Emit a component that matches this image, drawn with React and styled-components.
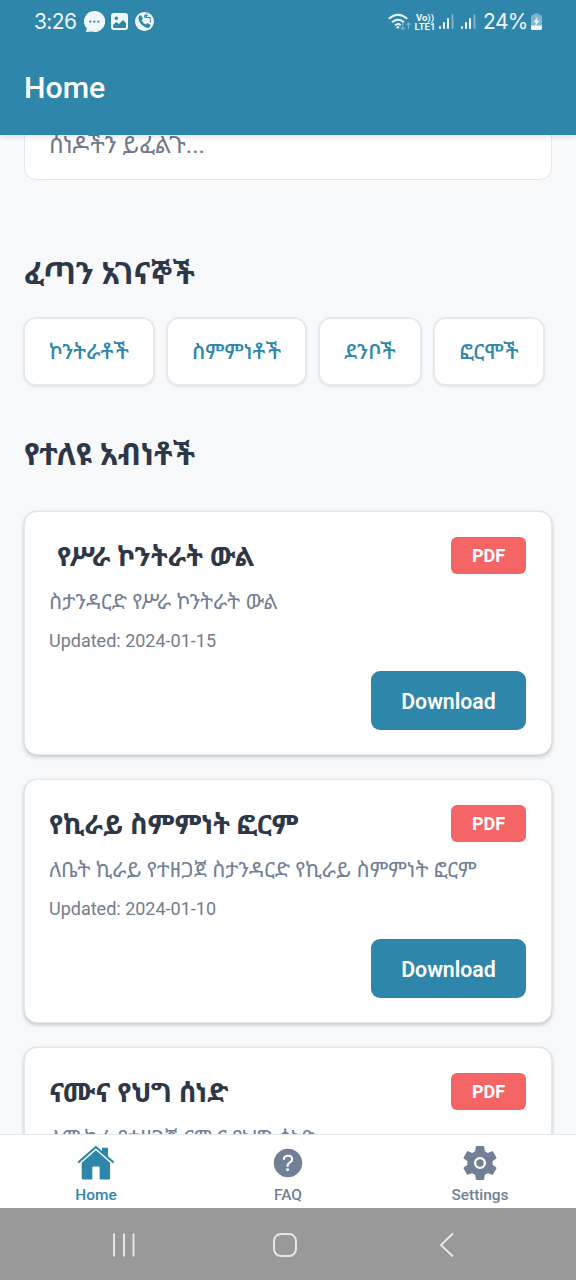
import React from "react";
import styled, { createGlobalStyle } from "styled-components";
import { IoHelpCircle } from "react-icons/io5";

const GlobalStyle = createGlobalStyle`
  * {
    box-sizing: border-box;
  }
  body {
    margin: 0;
    background: #f7f9fb;
    font-family: Roboto, "Noto Sans", "Noto Sans Ethiopic", sans-serif;
  }
`;

const Screen = styled.div`
  display: flex;
  flex-direction: column;
  width: 576px;
  height: 1280px;
  overflow: hidden;
  background: #f7f9fb;
`;

const Header = styled.header`
  flex: none;
  height: 135px;
  background: #2e86ab;
  color: #fff;
  box-shadow: 0 1px 6px rgba(0, 0, 0, 0.15);
  z-index: 1;
`;

const StatusBar = styled.div`
  display: flex;
  align-items: center;
  justify-content: space-between;
  height: 43px;
  padding: 0 34px;
  color: #f0f7fb;
`;

const StatusGroup = styled.div`
  display: flex;
  align-items: center;
`;

const StatusText = styled.span`
  flex: none;
  width: ${(props) => props.$width}px;
  margin-left: ${(props) => props.$gap || 0}px;
  font-family: Inter, sans-serif;
  font-size: 21px;
  line-height: 43px;
  letter-spacing: -0.6px;
  white-space: nowrap;
`;

const StatusIcon = styled.svg`
  display: block;
  flex: none;
  margin-left: ${(props) => props.$gap || 0}px;
`;

const Lte = styled.div`
  flex: none;
  width: 22px;
  margin-left: 3px;
  font-size: 9.5px;
  font-weight: 700;
  line-height: 9px;
  text-align: center;
  white-space: nowrap;
`;

const Title = styled.h1`
  margin: 0;
  padding: 25px 24px 0;
  font-size: 30.3px;
  font-weight: 500;
  line-height: 40px;
`;

const Content = styled.main`
  flex: 1;
  min-height: 0;
  overflow: hidden;
  padding: 0 24px;
`;

const SearchBox = styled.div`
  height: 76px;
  margin-top: -31px;
  padding: 26px 24px 0;
  border: 1.5px solid #e2e8f0;
  border-radius: 12px;
  background: #fff;
  color: #717988;
  font-size: 24px;
  line-height: 28px;
`;

const SectionTitle = styled.h2`
  height: 36px;
  margin: ${(props) => props.$top}px 0 0;
  color: #2d3748;
  font-size: 30.3px;
  font-weight: 700;
  line-height: 36px;
`;

const Chips = styled.div`
  display: flex;
  gap: 11px;
  margin: 25px 0 0 -1px;
`;

const Chip = styled.button`
  flex: none;
  width: ${(props) => props.$width}px;
  height: 69px;
  padding: 0 0 2px;
  border: 2px solid #e6eaef;
  border-radius: 13px;
  background: #fff;
  box-shadow: 0 1px 2px rgba(0, 0, 0, 0.08);
  color: #2e86ab;
  font-family: inherit;
  font-size: 21.3px;
  font-weight: 500;
`;

const CardList = styled.div`
  display: flex;
  flex-direction: column;
  gap: 24px;
  margin-top: 38px;
`;

const Card = styled.article`
  height: 244px;
  padding: 25px 25px 0 24px;
  border: 1.5px solid #e2e8ee;
  border-radius: 13px;
  background: #fff;
  box-shadow: 0 2px 4px rgba(0, 0, 0, 0.2), 0 0 1px rgba(0, 0, 0, 0.12);
`;

const CardHead = styled.div`
  display: flex;
  align-items: flex-start;
  justify-content: space-between;
`;

const CardTitle = styled.h3`
  margin: 0;
  padding-left: ${(props) => props.$indent || 0}px;
  color: #2d3748;
  font-size: 27.3px;
  font-weight: 700;
  line-height: 40px;
  white-space: nowrap;
`;

const Badge = styled.span`
  width: 75px;
  height: 37px;
  border-radius: 6px;
  background: #f56565;
  color: #fff;
  font-size: 18px;
  font-weight: 700;
  line-height: 38px;
  text-align: center;
`;

const Description = styled.p`
  height: 30px;
  margin: 10px 0 0;
  color: #718096;
  font-size: 21.4px;
  line-height: 30px;
  white-space: nowrap;
`;

const Updated = styled.p`
  margin: 13px 0 0;
  color: #747d8c;
  font-size: 18px;
  line-height: 22px;
`;

const Download = styled.button`
  display: block;
  width: 155px;
  height: 59px;
  margin: 19px 0 0 auto;
  padding: 2px 0 0;
  border: 0;
  border-radius: 9px;
  background: #2e86ab;
  color: #fff;
  font-family: inherit;
  font-size: 21.3px;
  font-weight: 600;
`;

const TabBar = styled.nav`
  display: flex;
  flex: none;
  height: 74px;
  border-top: 1px solid #e2e8f0;
  background: #fff;
  z-index: 1;
`;

const Tab = styled.div`
  display: flex;
  flex: 1;
  flex-direction: column;
  align-items: center;
  padding-top: 9px;
  color: ${(props) => (props.$active ? "#2e86ab" : "#718096")};
  font-size: 15.4px;
  font-weight: 500;

  svg {
    display: block;
    width: 38px;
    height: 38px;
  }

  span {
    margin-top: 4px;
    line-height: 18px;
  }
`;

const SystemBar = styled.footer`
  display: grid;
  flex: none;
  grid-template-columns: 162px 160px 164px;
  height: 72px;
  padding-left: 43px;
  background: #999;

  svg {
    place-self: center;
    margin-top: 1px;
  }
`;

const links = [
  { label: "ኮንትራቶች", width: 132 },
  { label: "ስምምነቶች", width: 141 },
  { label: "ደንቦች", width: 104 },
  { label: "ፎርሞች", width: 112 },
];

const documents = [
  {
    title: "የሥራ ኮንትራት ውል",
    indent: 8,
    description: "ስታንዳርድ የሥራ ኮንትራት ውል",
    updated: "2024-01-15",
  },
  {
    title: "የኪራይ ስምምነት ፎርም",
    description: "ለቤት ኪራይ የተዘጋጀ ስታንዳርድ የኪራይ ስምምነት ፎርም",
    updated: "2024-01-10",
  },
  {
    title: "ናሙና የህግ ሰነድ",
    description: "ለሙከራ የተዘጋጀ ናሙና የህግ ሰነድ",
    updated: "2024-01-05",
  },
];

function HomeIcon() {
  return (
    <svg viewBox="0 0 38 38" fill="currentColor">
      <path d="M1.8 18 18.9 3 36 18" fill="none" stroke="currentColor" strokeWidth="2.2" strokeLinecap="round" strokeLinejoin="round" />
      <path d="M25 3.8h6v10L25 8.5Z" />
      <path d="M4.7 18.8 18.9 6.3 33.1 18.8V34q0 1.5-1.5 1.5h-9V23.6q0-1-1-1h-5.3q-1 0-1 1v11.9h-9q-1.6 0-1.6-1.5Z" />
    </svg>
  );
}

function SettingsIcon() {
  return (
    <svg viewBox="1.25 1.25 21.5 21.5" fill="currentColor">
      <path d="M19.14 12.94c.04-.3.06-.61.06-.94 0-.32-.02-.64-.07-.94l2.03-1.58c.18-.14.23-.41.12-.61l-1.92-3.32c-.12-.22-.37-.29-.59-.22l-2.39.96c-.5-.38-1.03-.7-1.62-.94l-.36-2.54c-.04-.24-.24-.41-.48-.41h-3.84c-.24 0-.43.17-.47.41l-.36 2.54c-.59.24-1.13.57-1.62.94l-2.39-.96c-.22-.08-.47 0-.59.22L2.74 8.87c-.12.21-.08.47.12.61l2.03 1.58c-.05.3-.09.63-.09.94s.02.64.07.94l-2.03 1.58c-.18.14-.23.41-.12.61l1.92 3.32c.12.22.37.29.59.22l2.39-.96c.5.38 1.03.7 1.62.94l.36 2.54c.05.24.24.41.48.41h3.84c.24 0 .44-.17.47-.41l.36-2.54c.59-.24 1.13-.56 1.62-.94l2.39.96c.22.08.47 0 .59-.22l1.92-3.32c.12-.22.07-.47-.12-.61Z" />
      <circle cx="12" cy="12" r="2.75" fill="none" stroke="#fff" strokeWidth="1.35" />
    </svg>
  );
}

function Signal({ gap }) {
  return (
    <StatusIcon $gap={gap} width="15" height="17" viewBox="0 0 15 17" fill="currentColor">
      <rect x="0" y="13" width="2" height="3" rx="1" />
      <rect x="4" y="9" width="2" height="7" rx="1" />
      <rect x="8" y="5" width="2" height="11" rx="1" />
      <rect x="12.5" y="1" width="2" height="15" rx="1" opacity=".4" />
    </StatusIcon>
  );
}

function Status() {
  return (
    <StatusBar>
      <StatusGroup>
        <StatusText $width={43}>3:26</StatusText>
        <StatusIcon $gap={7} width="21" height="21" viewBox="0 0 21 21">
          <path d="M10.5 0a10.5 10.5 0 1 1-2.6 20.6L2 21l.8-3.4A10.5 10.5 0 0 1 10.5 0Z" fill="currentColor" />
          <circle cx="6.3" cy="10.7" r="1.1" fill="#2e86ab" />
          <circle cx="10.3" cy="10.7" r="1.1" fill="#2e86ab" />
          <circle cx="14.3" cy="10.7" r="1.1" fill="#2e86ab" />
        </StatusIcon>
        <StatusIcon $gap={6} width="17" height="17" viewBox="0 0 17 17">
          <rect width="17" height="17" rx="3" fill="currentColor" />
          <circle cx="5.4" cy="5.2" r="1.7" fill="#2e86ab" />
          <path d="M2 14v-2l3-3 3 2 4-4 3 3v4q0 1-1 1H3q-1 0-1-1Z" fill="#2e86ab" />
        </StatusIcon>
        <StatusIcon $gap={7} width="19" height="19" viewBox="0 0 19 19">
          <circle cx="9.5" cy="9.5" r="9.5" fill="currentColor" />
          <path d="M4.2 4.2 6 3l2 3.8-1.5 1.5q1.5 3 4.1 4.1l1.6-1.5 3.5 2.2-1.2 2.2q-1.6 1.3-4.2 0-5.2-2.5-6.8-8-.4-1.8.7-3.1Z" fill="#2e86ab" />
          <path d="M9.5 5.5v-2h3M10 5.5h5.3v5M12.5 1.2 10 3.5l2.5 2" fill="none" stroke="#2e86ab" strokeWidth="1" />
        </StatusIcon>
      </StatusGroup>
      <StatusGroup>
        <StatusIcon width="23" height="18" viewBox="0 0 23 18" fill="none" stroke="currentColor" strokeWidth="2">
          <path d="M.8 5.7Q10 -2.2 19.2 5.7M4 9.2q6-5 12 0M7 12.3q3-2.4 5.7-.2" />
          <circle cx="9.8" cy="14.3" r="1.4" fill="currentColor" stroke="none" />
          <path d="M14.8 9.5v7m-2-2 2 2 2-2M20.5 16v-6m-2 2 2-2 2 2" strokeWidth="1.2" opacity=".4" />
        </StatusIcon>
        <Lte>
          Vo))
          <br />
          LTE1
        </Lte>
        <Signal gap={3} />
        <Signal gap={7} />
        <StatusText $width={43} $gap={7}>
          24%
        </StatusText>
        <StatusIcon $gap={5} width="11" height="17" viewBox="0 0 11 17">
          <path d="M3 2V.5h5V2h1.5Q11 2 11 3.5V13H0V3.5Q0 2 1.5 2Z" fill="currentColor" opacity=".42" />
          <path d="M0 12.5h11v3q0 1.5-1.5 1.5h-8Q0 17 0 15.5Z" fill="currentColor" />
          <path d="M6.5 4 2.3 9.2h2.6L4.3 13l4.4-5.3H6Z" fill="currentColor" />
        </StatusIcon>
      </StatusGroup>
    </StatusBar>
  );
}

function DocumentCard({ doc }) {
  return (
    <Card>
      <CardHead>
        <CardTitle $indent={doc.indent}>{doc.title}</CardTitle>
        <Badge>PDF</Badge>
      </CardHead>
      <Description>{doc.description}</Description>
      <Updated>Updated: {doc.updated}</Updated>
      <Download>Download</Download>
    </Card>
  );
}

function App() {
  return (
    <>
      <GlobalStyle />
      <Screen>
        <Header>
          <Status />
          <Title>Home</Title>
        </Header>
        <Content>
          <SearchBox>ሰነዶችን ይፈልጉ...</SearchBox>
          <SectionTitle $top={76}>ፈጣን አገናኞች</SectionTitle>
          <Chips>
            {links.map((link) => (
              <Chip key={link.label} $width={link.width}>
                {link.label}
              </Chip>
            ))}
          </Chips>
          <SectionTitle $top={51}>የተለዩ አብነቶች</SectionTitle>
          <CardList>
            {documents.map((doc) => (
              <DocumentCard key={doc.title} doc={doc} />
            ))}
          </CardList>
        </Content>
        <TabBar>
          <Tab $active>
            <HomeIcon />
            <span>Home</span>
          </Tab>
          <Tab>
            <IoHelpCircle />
            <span>FAQ</span>
          </Tab>
          <Tab>
            <SettingsIcon />
            <span>Settings</span>
          </Tab>
        </TabBar>
        <SystemBar>
          <svg width="24" height="26" viewBox="0 0 24 26" stroke="#e6e6e6" strokeWidth="2">
            <path d="M2 1.5v23M12 1.5v23M21.5 1.5v23" />
          </svg>
          <svg width="26" height="26" viewBox="0 0 26 26" fill="none" stroke="#e6e6e6" strokeWidth="2">
            <rect x="2" y="2" width="22" height="22" rx="7" />
          </svg>
          <svg width="16" height="26" viewBox="0 0 16 26" fill="none" stroke="#e6e6e6" strokeWidth="2">
            <path d="M14 1.5 2 13l12 11.5" />
          </svg>
        </SystemBar>
      </Screen>
    </>
  );
}

export default App;
